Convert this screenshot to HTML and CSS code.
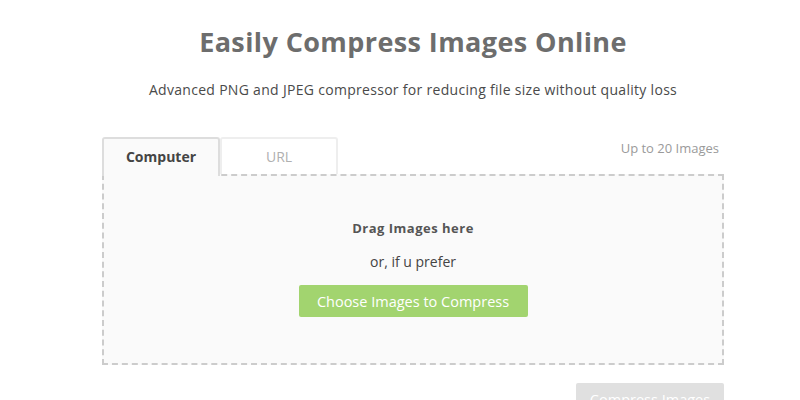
FILE: index.html
```html
<!DOCTYPE html>
<html>
<head>
<meta charset="utf-8">
<link rel="stylesheet" href="styles.css">
</head>
<body>
<div class="page">
  <h1 class="title">Easily Compress Images Online</h1>
  <p class="subtitle">Advanced PNG and JPEG compressor for reducing file size without quality loss</p>
  <div class="tabs-row">
    <div class="tabs">
      <div class="tab active">Computer</div>
      <div class="tab">URL</div>
    </div>
    <div class="limit">Up to 20 Images</div>
  </div>
  <div class="dropzone">
    <div class="drag">Drag Images here</div>
    <div class="or">or, if u prefer</div>
    <button class="choose">Choose Images to Compress</button>
  </div>
  <div class="actions">
    <button class="compress">Compress Images</button>
  </div>
</div>
</body>
</html>
```

FILE: styles.css
```css
html, body {
  margin: 0;
  padding: 0;
  background: #fff;
  font-family: "Open Sans", "Lato", sans-serif;
  overflow: hidden;
}
.page {
  width: 622px;
  margin-left: 102px;
  display: flex;
  flex-direction: column;
}
.title {
  margin: 25px 0 0;
  text-align: center;
  font-size: 27px;
  font-weight: 700;
  color: #6d6d6d;
  line-height: 34px;
  letter-spacing: 0.4px;
}
.subtitle {
  margin: 22px 0 0;
  text-align: center;
  font-size: 14px;
  color: #4a4a4a;
  line-height: 18px;
  letter-spacing: 0.3px;
}
.tabs-row {
  margin-top: 38px;
  display: flex;
  justify-content: space-between;
  align-items: flex-start;
}
.tabs {
  display: flex;
}
.tab {
  box-sizing: border-box;
  width: 118px;
  height: 37px;
  border: 2px solid #eeeeee;
  border-bottom: none;
  border-radius: 3px 3px 0 0;
  background: #fff;
  color: #b0b0b0;
  font-size: 14px;
  line-height: 35px;
  text-align: center;
}
.tab.active {
  border-color: #dddddd;
  background: #fafafa;
  color: #444;
  font-weight: 700;
  position: relative;
  z-index: 1;
  height: 39px;
  margin-bottom: -2px;
}
.limit {
  margin-top: 2px;
  margin-right: 5px;
  font-size: 13px;
  color: #9a9a9a;
}
.dropzone {
  box-sizing: border-box;
  height: 191px;
  border: 2px dashed #cccccc;
  background: #fafafa;
  display: flex;
  flex-direction: column;
  align-items: center;
  padding-top: 42px;
}
.drag {
  font-size: 13px;
  font-weight: 700;
  color: #555;
  line-height: 20px;
  letter-spacing: 0.5px;
}
.or {
  margin-top: 14px;
  font-size: 14px;
  color: #444;
  line-height: 20px;
}
.choose {
  margin-top: 13px;
  width: 229px;
  height: 32px;
  border: none;
  border-radius: 2px;
  background: #a2d46f;
  color: #fff;
  font-family: inherit;
  font-size: 14.5px;
  padding: 0;
}
.actions {
  display: flex;
  justify-content: flex-end;
  margin-top: 18px;
}
.compress {
  width: 148px;
  height: 32px;
  border: none;
  border-radius: 2px;
  background: #e0e0e0;
  color: #fff;
  font-family: inherit;
  font-size: 14.5px;
  padding: 0;
}
```
